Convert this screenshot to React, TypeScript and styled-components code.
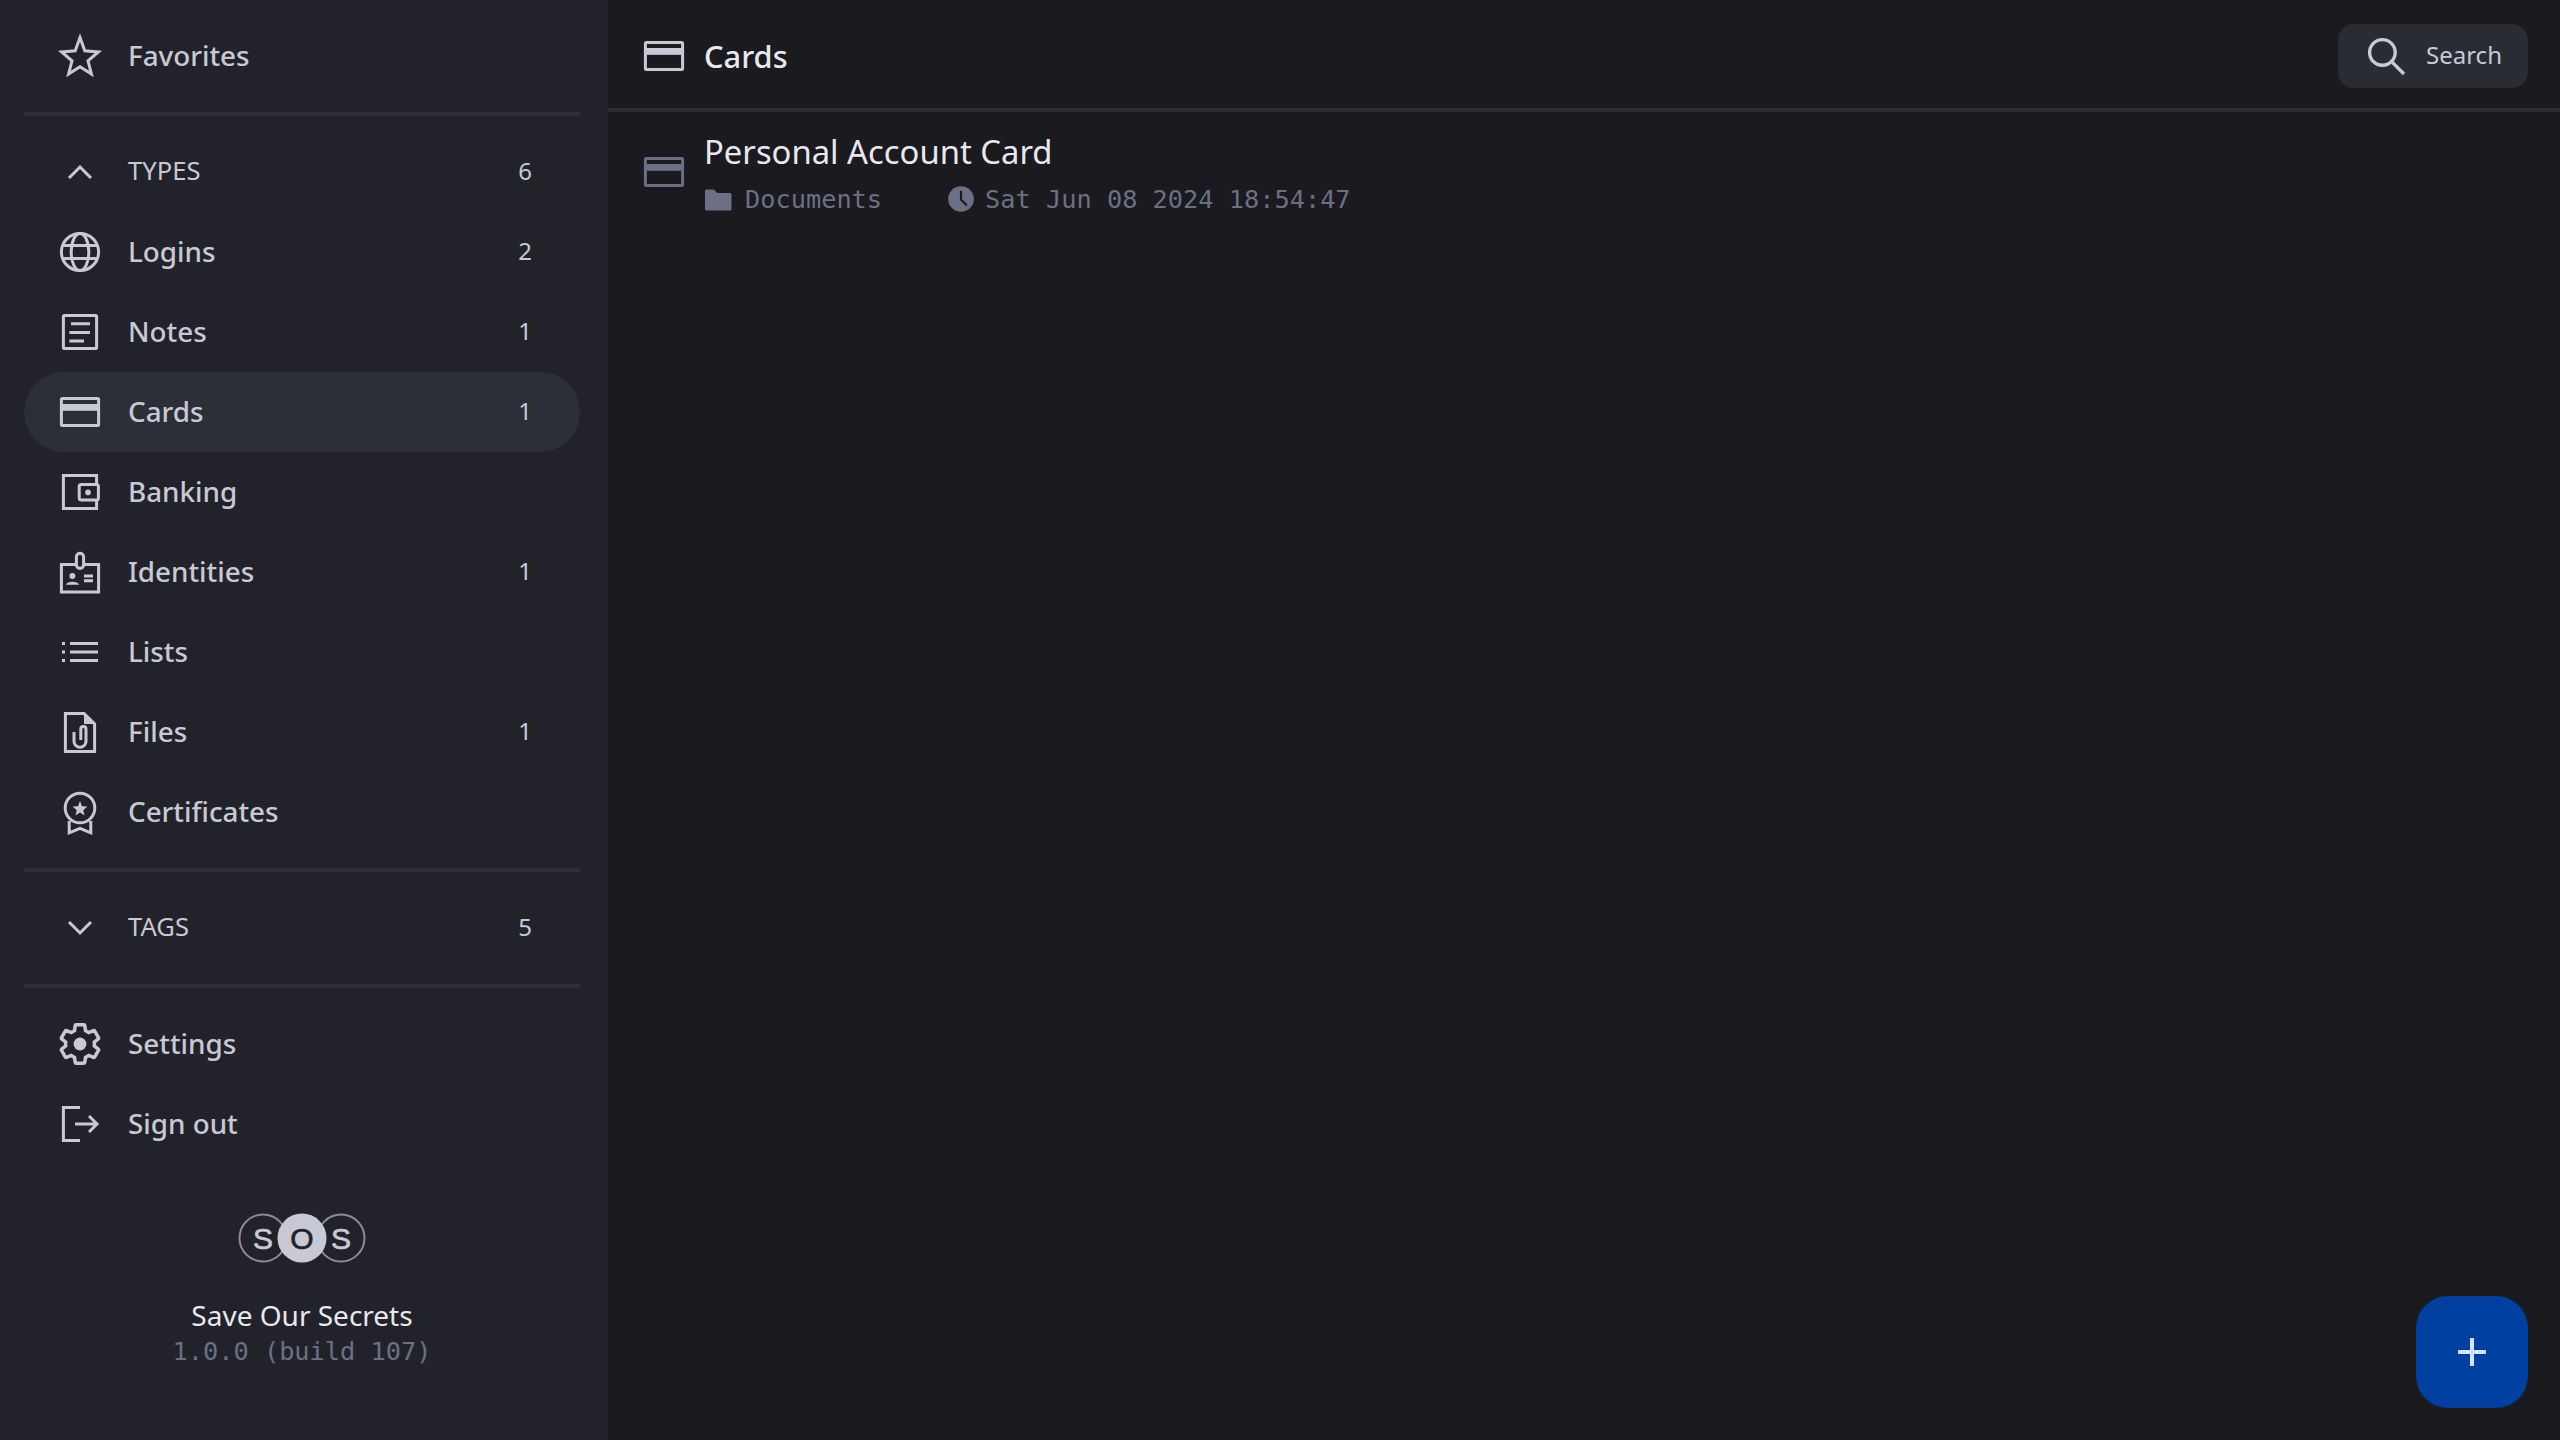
import React from 'react'
import styled, { createGlobalStyle } from 'styled-components'

const GlobalStyle = createGlobalStyle`
  html, body {
    margin: 0;
    padding: 0;
    height: 100%;
    background: #1a1a1f;
  }
  #root {
    height: 100%;
  }
  * {
    box-sizing: border-box;
  }
`

const SANS = `"Noto Sans", "Open Sans", sans-serif`
const MONO = `"DejaVu Sans Mono", monospace`

const Page = styled.div`
  display: flex;
  width: 2560px;
  height: 1440px;
  overflow: hidden;
  position: relative;
  font-family: ${SANS};
  background: #1a1a1f;
`

const Sidebar = styled.aside`
  width: 608px;
  flex-shrink: 0;
  display: flex;
  flex-direction: column;
  padding: 16px 28px 0 24px;
  background: #22232a;
`

const Divider = styled.hr`
  width: 100%;
  height: 4px;
  margin: 16px 0;
  border: 0;
  flex-shrink: 0;
  background: #2c2e38;
`

const Row = styled.div<{ $active?: boolean }>`
  display: flex;
  align-items: center;
  flex-shrink: 0;
  height: 80px;
  padding: 0 48px 0 32px;
  gap: 24px;
  border-radius: 40px;
  color: #c8c9d5;
  background: ${(p) => (p.$active ? '#2c2e38' : 'transparent')};
`

const Label = styled.span`
  flex: 1;
  font-size: 27.8px;
  font-weight: 500;
  line-height: 38px;
  margin-top: -2px;
`

const SectionLabel = styled.span`
  flex: 1;
  font-size: 25.6px;
  font-weight: 400;
  line-height: 36px;
  margin-top: -2px;
`

const Count = styled.span`
  font-size: 24px;
  line-height: 34px;
  margin-top: -2px;
`

const Brand = styled.div`
  display: flex;
  flex-direction: column;
  align-items: center;
  margin-top: 49px;
`

const BrandName = styled.div`
  margin-top: 32px;
  font-size: 28px;
  line-height: 40px;
  color: #e8e8ee;
`

const BuildInfo = styled.div`
  margin-top: 1px;
  font-family: ${MONO};
  font-size: 25.3px;
  line-height: 32px;
  color: #6b7085;
`

const Main = styled.main`
  flex: 1;
  display: flex;
  flex-direction: column;
  min-width: 0;
`

const Header = styled.header`
  display: flex;
  align-items: center;
  height: 112px;
  padding: 4px 32px 0;
  gap: 16px;
  color: #c8c9d5;
  border-bottom: 4px solid #2a2d35;
`

const HeaderTitle = styled.h1`
  flex: 1;
  margin: 0;
  font-size: 30.8px;
  font-weight: 500;
  color: #e8e8ee;
`

const SearchButton = styled.button`
  display: flex;
  align-items: center;
  gap: 16px;
  width: 190px;
  height: 64px;
  padding: 0 24px;
  border: 0;
  border-radius: 16px;
  font-family: ${SANS};
  font-size: 24px;
  color: #c8c9d5;
  background: #292c33;
`

const SearchLabel = styled.span`
  margin-top: -3px;
`

const Item = styled.div`
  display: flex;
  align-items: center;
  gap: 16px;
  padding: 16px 32px;
  color: #6b7085;
`

const ItemText = styled.div`
  display: flex;
  flex-direction: column;
`

const ItemTitle = styled.div`
  font-size: 32.8px;
  line-height: 48px;
  color: #e8e8ee;
`

const Meta = styled.div`
  display: flex;
  align-items: center;
  height: 40px;
  padding-top: 6px;
  font-family: ${MONO};
  font-size: 25.3px;
  line-height: 32px;
  color: #6b7085;
`

const MetaPart = styled.span<{ $gap: number }>`
  display: flex;
  align-items: center;
  gap: ${(p) => p.$gap}px;
  margin-right: 65px;
`

const MetaText = styled.span`
  margin-top: 1px;
`

const AddButton = styled.button`
  position: absolute;
  right: 32px;
  bottom: 32px;
  width: 112px;
  height: 112px;
  display: flex;
  align-items: center;
  justify-content: center;
  border: 0;
  border-radius: 32px;
  color: #d5e0ff;
  background: #0040a1;
`

const Svg = styled.svg<{ $size?: number }>`
  width: ${(p) => p.$size || 48}px;
  height: ${(p) => p.$size || 48}px;
  flex-shrink: 0;
  display: block;
  fill: none;
  stroke: currentColor;
  stroke-width: 1.5;
`

const Solid = { fill: 'currentColor', stroke: 'none' }

const IconBox = ({ children, size }: { children: React.ReactNode; size?: number }) => (
  <Svg viewBox="0 0 24 24" $size={size}>{children}</Svg>
)

const StarIcon = () => (
  <IconBox>
    <path d="M12 2.8 L14.4 9.4 L21.2 10 L16 14.4 L17.7 21 L12 17.4 L6.3 21 L8 14.4 L2.8 10 L9.6 9.4 Z" />
  </IconBox>
)
const ChevronUp = () => (
  <IconBox><path d="M6.5 15 L12 9.5 L17.5 15" /></IconBox>
)
const ChevronDown = () => (
  <IconBox><path d="M6.5 9 L12 14.5 L17.5 9" /></IconBox>
)
const GlobeIcon = () => (
  <IconBox>
    <circle cx="12" cy="12" r="9.3" />
    <ellipse cx="12" cy="12" rx="4.4" ry="9.3" />
    <path d="M3.2 8.7 H20.8 M3.2 15.3 H20.8" />
  </IconBox>
)
const NoteIcon = () => (
  <IconBox>
    <rect x="3.7" y="3.7" width="16.6" height="16.6" rx="0.5" />
    <path d="M7.5 7.9 H17 M6.7 12.3 H17 M6.7 16.5 H14" />
  </IconBox>
)
const CardIcon = () => (
  <IconBox>
    <rect x="2.7" y="5.2" width="18.6" height="13.6" rx="0.5" />
    <rect x="2.7" y="8" width="18.6" height="3.4" style={Solid} />
  </IconBox>
)
const WalletIcon = () => (
  <IconBox>
    <path d="M20.3 8.2 V3.7 H3.7 V20.3 H20.3 V16" />
    <rect x="11.6" y="8.2" width="9.6" height="7.8" rx="1" />
    <circle cx="16" cy="12.2" r="1.4" style={Solid} />
  </IconBox>
)
const IdentityIcon = () => (
  <IconBox>
    <path d="M10 8.2 H2.7 V22 H21.3 V8.2 H14" />
    <rect x="10.2" y="2.6" width="3.6" height="7.6" rx="1.8" />
    <circle cx="8.2" cy="14" r="1.5" style={Solid} />
    <path d="M5 18.4 C5.4 16.4 11 16.4 11.6 18.4 Z" style={Solid} />
    <path d="M14 14 H18.5 M14 16.4 H18.5" />
  </IconBox>
)
const ListIcon = () => (
  <IconBox>
    <path d="M7 7.75 H21 M7 12 H21 M7 16.25 H21" />
    <path d="M3 7.75 H4.5 M3 12 H4.5 M3 16.25 H4.5" />
  </IconBox>
)
const FileIcon = () => (
  <IconBox>
    <path d="M4.7 2.8 H14 L19.3 8 V21.8 H4.7 Z" />
    <path d="M14 2.8 L19.3 8 H14 Z" style={Solid} />
    <path d="M9 12 V16.6 a3 3 0 0 0 6 0 V10.6 a1.3 1.3 0 0 0 -2.6 0 V16" />
  </IconBox>
)
const CertificateIcon = () => (
  <IconBox>
    <circle cx="12" cy="10" r="7.4" />
    <path d="M12 6.5 L13 9.1 L15.7 9.3 L13.6 11.1 L14.3 13.7 L12 12.3 L9.7 13.7 L10.4 11.1 L8.3 9.3 L11 9.1 Z" style={Solid} />
    <path d="M6.6 16.5 V22.4 L12 20.2 L17.4 22.4 V16.5" />
  </IconBox>
)
const GearIcon = () => (
  <IconBox>
    <path strokeWidth="1.75" d="M19.14 12.94c.04-.3.06-.61.06-.94 0-.32-.02-.64-.07-.94l2.03-1.58c.18-.14.23-.41.12-.61l-1.92-3.32c-.12-.22-.37-.29-.59-.22l-2.39.96c-.5-.38-1.03-.7-1.62-.94l-.36-2.54c-.04-.24-.24-.41-.48-.41h-3.84c-.24 0-.43.17-.47.41l-.36 2.54c-.59.24-1.13.57-1.62.94l-2.39-.96c-.22-.08-.47 0-.59.22L2.74 8.87c-.12.21-.08.47.12.61l2.03 1.58c-.05.3-.09.63-.09.94s.02.64.07.94l-2.03 1.58c-.18.14-.23.41-.12.61l1.92 3.32c.12.22.37.29.59.22l2.39-.96c.5.38 1.03.7 1.62.94l.36 2.54c.05.24.24.41.48.41h3.84c.24 0 .44-.17.47-.41l.36-2.54c.59-.24 1.13-.56 1.62-.94l2.39.96c.22.08.47 0 .59-.22l1.92-3.32c.12-.22.07-.47-.12-.61l-2.01-1.58z" />
    <circle cx="12" cy="12" r="3.2" style={Solid} />
  </IconBox>
)
const SignOutIcon = () => (
  <IconBox>
    <path d="M12 3.7 H3.7 V20.3 H12" />
    <path d="M9.5 12 H20.5 M16.5 8 L20.5 12 L16.5 16" />
  </IconBox>
)
const SearchIcon = () => (
  <IconBox>
    <circle cx="10.2" cy="10.2" r="6.4" strokeWidth="1.7" />
    <path d="M14.8 14.8 L21 21" strokeWidth="1.7" />
  </IconBox>
)
const FolderIcon = () => (
  <Svg viewBox="0 0 28 24" $size={28}>
    <path d="M1 4 a1.5 1.5 0 0 1 1.5 -1.5 H10 L13 6 H26 a1.5 1.5 0 0 1 1.5 1.5 V22 a1.5 1.5 0 0 1 -1.5 1.5 H2.5 A1.5 1.5 0 0 1 1 22 Z" style={Solid} />
  </Svg>
)
const ClockIcon = () => (
  <IconBox size={28}>
    <circle cx="12" cy="12" r="11" style={Solid} />
    <path d="M12 5 V12.5 L17 17.5" stroke="#1a1a1f" strokeWidth="1.8" />
  </IconBox>
)
const PlusIcon = () => (
  <Svg viewBox="0 0 28 28" $size={28}>
    <path d="M14 0 V28 M0 14 H28" strokeWidth="4" />
  </Svg>
)

const Logo = () => (
  <svg width="128" height="50" viewBox="0 0 128 50">
    <circle cx="25" cy="25" r="23.5" fill="none" stroke="#8a8b96" strokeWidth="2" />
    <circle cx="103" cy="25" r="23.5" fill="none" stroke="#8a8b96" strokeWidth="2" />
    <circle cx="64" cy="25" r="24.5" fill="#c8c9d5" />
    <g fontFamily='"Liberation Sans", sans-serif' fontSize="30" textAnchor="middle">
      <text x="25" y="36" fill="#c8c9d5" stroke="#c8c9d5" strokeWidth="0.7">S</text>
      <text x="64" y="36" fill="#22232a" stroke="#22232a" strokeWidth="0.7">O</text>
      <text x="103" y="36" fill="#c8c9d5" stroke="#c8c9d5" strokeWidth="0.7">S</text>
    </g>
  </svg>
)

type NavEntry = {
  label: string
  icon: React.ReactNode
  count?: number
  active?: boolean
}

const types: NavEntry[] = [
  { label: 'Logins', icon: <GlobeIcon />, count: 2 },
  { label: 'Notes', icon: <NoteIcon />, count: 1 },
  { label: 'Cards', icon: <CardIcon />, count: 1, active: true },
  { label: 'Banking', icon: <WalletIcon /> },
  { label: 'Identities', icon: <IdentityIcon />, count: 1 },
  { label: 'Lists', icon: <ListIcon /> },
  { label: 'Files', icon: <FileIcon />, count: 1 },
  { label: 'Certificates', icon: <CertificateIcon /> },
]

export default function App() {
  return (
    <Page>
      <GlobalStyle />
      <Sidebar>
        <Row>
          <StarIcon />
          <Label>Favorites</Label>
        </Row>
        <Divider />
        <Row>
          <ChevronUp />
          <SectionLabel>TYPES</SectionLabel>
          <Count>6</Count>
        </Row>
        {types.map((t) => (
          <Row key={t.label} $active={t.active}>
            {t.icon}
            <Label>{t.label}</Label>
            {t.count !== undefined && <Count>{t.count}</Count>}
          </Row>
        ))}
        <Divider />
        <Row>
          <ChevronDown />
          <SectionLabel>TAGS</SectionLabel>
          <Count>5</Count>
        </Row>
        <Divider />
        <Row>
          <GearIcon />
          <Label>Settings</Label>
        </Row>
        <Row>
          <SignOutIcon />
          <Label>Sign out</Label>
        </Row>
        <Brand>
          <Logo />
          <BrandName>Save Our Secrets</BrandName>
          <BuildInfo>1.0.0 (build 107)</BuildInfo>
        </Brand>
      </Sidebar>
      <Main>
        <Header>
          <CardIcon />
          <HeaderTitle>Cards</HeaderTitle>
          <SearchButton>
            <SearchIcon />
            <SearchLabel>Search</SearchLabel>
          </SearchButton>
        </Header>
        <Item>
          <CardIcon />
          <ItemText>
            <ItemTitle>Personal Account Card</ItemTitle>
            <Meta>
              <MetaPart $gap={13}>
                <FolderIcon />
                <MetaText>Documents</MetaText>
              </MetaPart>
              <MetaPart $gap={10}>
                <ClockIcon />
                <MetaText>Sat Jun 08 2024 18:54:47</MetaText>
              </MetaPart>
            </Meta>
          </ItemText>
        </Item>
      </Main>
      <AddButton>
        <PlusIcon />
      </AddButton>
    </Page>
  )
}
